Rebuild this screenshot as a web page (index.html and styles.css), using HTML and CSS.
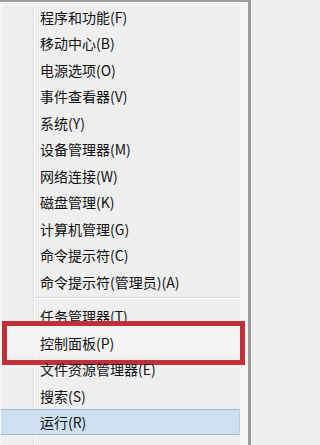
FILE: index.html
```html
<!DOCTYPE html>
<html lang="zh-CN">
<head>
<meta charset="utf-8">
<title>Win+X 菜单</title>
<link rel="stylesheet" href="styles.css">
</head>
<body>
<div class="frame">
  <div class="top-edge"></div>
  <div class="body">
    <div class="menu">
      <ul class="group">
        <li class="item">程序和功能(F)</li>
        <li class="item">移动中心(B)</li>
        <li class="item">电源选项(O)</li>
        <li class="item">事件查看器(V)</li>
        <li class="item">系统(Y)</li>
        <li class="item">设备管理器(M)</li>
        <li class="item">网络连接(W)</li>
        <li class="item">磁盘管理(K)</li>
        <li class="item">计算机管理(G)</li>
        <li class="item">命令提示符(C)</li>
        <li class="item">命令提示符(管理员)(A)</li>
      </ul>
      <div class="sep"></div>
      <ul class="group">
        <li class="item">任务管理器(T)</li>
        <li class="item marked">控制面板(P)<span class="redbox"></span></li>
        <li class="item">文件资源管理器(E)</li>
        <li class="item">搜索(S)</li>
        <li class="item active">运行(R)</li>
      </ul>
    </div>
    <div class="right-strip"></div>
    <div class="right-border"></div>
  </div>
</div>
</body>
</html>
```
FILE: styles.css
```css
html, body {
  margin: 0;
  padding: 0;
}
body {
  width: 251px;
  height: 445px;
  overflow: hidden;
  background: #efefef;
  font-family: "Noto Sans CJK SC", "Noto Sans", sans-serif;
  font-size: 14px;
  color: #111111;
}
.frame {
  display: flex;
  flex-direction: column;
  height: 445px;
}
.top-edge {
  height: 2px;
  background: #9c9c9c;
  flex: none;
}
.body {
  flex: 1;
  display: flex;
}
.menu {
  flex: 1;
  padding-top: 1.5px;
  background:
    linear-gradient(to bottom, #ffffff 0 1px, #e2e2e2 1px 2px, #ffffff 2px 3px, transparent 3px) no-repeat 0 0 / 100% 4px,
    linear-gradient(to right, #f7f7f7 0 2px, #efefef 2px 33px, #e1e1e1 33px 34px, #fbfbfb 34px 35px, #efefef 35px);
}
.group {
  list-style: none;
  margin: 0;
  padding: 0;
}
.item {
  position: relative;
  height: 26.5px;
  display: flex;
  align-items: center;
  padding-left: 40px;
  white-space: nowrap;
}
.sep {
  height: 7.75px;
  margin-left: 35px;
  background: linear-gradient(to bottom, transparent 0 2px, #d6d6d6 2px 3px, #ffffff 3px 4px, transparent 4px);
}
.marked {
  background: #f6f3f4;
}
.redbox {
  position: absolute;
  left: 2px;
  right: -5px;
  top: -8px;
  bottom: -9px;
  border: 5px solid #c0303a;
  box-sizing: border-box;
}
.active {
  margin-left: 1px;
  padding-left: 39px;
  background: #cde0f2;
  border-top: 1px solid #9fbad6;
  border-bottom: 1px solid #9fbad6;
  border-right: 1px solid #b9cde2;
  height: 24.5px;
}
.right-strip {
  width: 8px;
  background: #f5f5f5;
}
.right-border {
  width: 3px;
  background: #9c9c9c;
}
```
